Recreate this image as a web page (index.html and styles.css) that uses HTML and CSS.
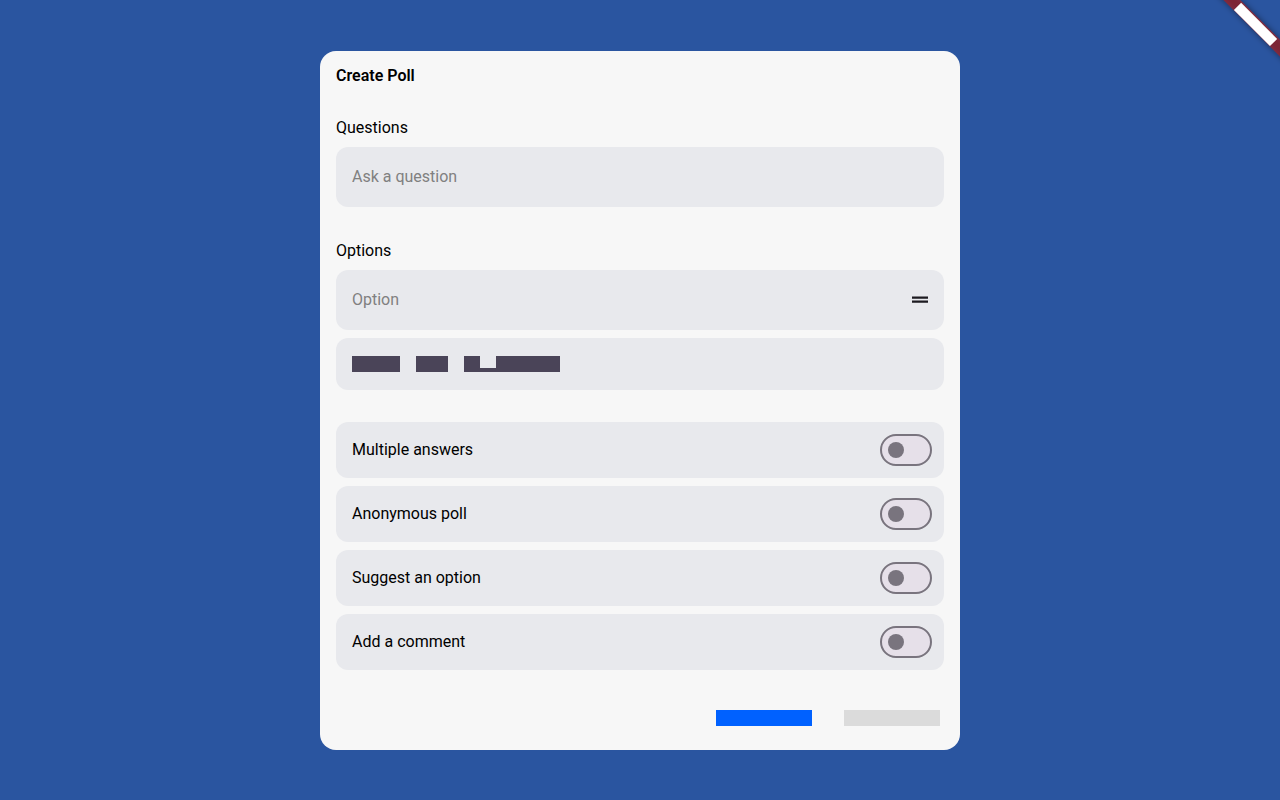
FILE: index.html
```html
<!DOCTYPE html>
<html lang="en">
<head>
<meta charset="utf-8">
<meta name="viewport" content="width=device-width, initial-scale=1">
<title>Create Poll</title>
<link rel="stylesheet" href="styles.css">
</head>
<body class="page">
<svg class="ribbon" width="80" height="80" viewBox="0 0 80 80" aria-hidden="true">
  <g transform="translate(80 0) rotate(45)">
    <rect class="ribbon-band" x="-60" y="28" width="120" height="12"/>
    <rect x="-25.5" y="29.5" width="51" height="10.2" fill="#fff"/>
  </g>
</svg>
<main class="card">
  <form class="poll">
    <h1 class="title">Create Poll</h1>

    <div class="group">
      <label class="label" for="question">Questions</label>
      <input class="field" id="question" type="text" placeholder="Ask a question">
    </div>

    <div class="group">
      <label class="label" for="option">Options</label>
      <div class="option">
        <input class="field" id="option" type="text" placeholder="Option">
        <svg class="handle" width="24" height="24" viewBox="0 0 24 24" fill="#1d1b20" aria-hidden="true"><path d="M20 8.5H4v2.2h16V8.500zM4 14.700h16v-2.200H4v2.200z"/></svg>
      </div>
      <button class="add" type="button" aria-label="Add an option">
        <svg width="208" height="16" viewBox="0 0 208 16" fill="#4a4458" aria-hidden="true"><path d="M0 0h48v16H0zM64 0h32v16H64zM112 0h16v12h16V0h64v16h-96z"/></svg>
      </button>
    </div>

    <div class="settings">
      <label class="row">Multiple answers<input class="switch" type="checkbox" role="switch"></label>
      <label class="row">Anonymous poll<input class="switch" type="checkbox" role="switch"></label>
      <label class="row">Suggest an option<input class="switch" type="checkbox" role="switch"></label>
      <label class="row">Add a comment<input class="switch" type="checkbox" role="switch"></label>
    </div>

    <div class="actions">
      <button class="action" type="button" aria-label="Create"><svg width="96" height="16" viewBox="0 0 96 16" aria-hidden="true"><rect width="96" height="16" fill="#0061ff"/></svg></button>
      <button class="action" type="button" aria-label="Cancel"><svg width="96" height="16" viewBox="0 0 96 16" aria-hidden="true"><rect width="96" height="16" fill="#dbdbdb"/></svg></button>
    </div>
  </form>
</main>
</body>
</html>
```

FILE: styles.css
```css
* {
  box-sizing: border-box;
}

.page {
  margin: 0;
  min-height: 100vh;
  display: grid;
  place-items: center;
  background: #2a55a0;
  color: #000;
  font: 16px/24px Roboto, sans-serif;
}

.ribbon {
  position: absolute;
  top: 0;
  right: 0;
}

.ribbon-band {
  fill: #b71c1c;
  fill-opacity: 0.627;
  filter: drop-shadow(0 0 3px rgba(0, 0, 0, 0.7));
}

.card {
  width: 50%;
  min-width: 320px;
  border-radius: 16px;
  background: #f7f7f7;
}

.poll {
  padding: 13px 16px 12px;
}

.title {
  margin: 0 0 28px;
  font-size: 16px;
  line-height: 24px;
  font-weight: 600;
}

.group {
  display: flex;
  flex-direction: column;
  margin-bottom: 32px;
}

.label {
  margin-bottom: 7px;
}

.field {
  width: 100%;
  height: 60px;
  padding: 0 16px;
  border: 0;
  border-radius: 12px;
  background: #e8e9ed;
  color: #000;
  font: inherit;
}

.field::placeholder {
  color: #808080;
  opacity: 1;
}

.option {
  display: grid;
  align-items: center;
}

.option .field,
.handle {
  grid-area: 1 / 1;
}

.handle {
  justify-self: end;
  margin-right: 12px;
}

.add {
  display: flex;
  align-items: center;
  height: 52px;
  margin-top: 8px;
  padding: 0 16px;
  border: 0;
  border-radius: 12px;
  background: #e8e9ed;
}

.settings {
  display: flex;
  flex-direction: column;
  gap: 8px;
}

.row {
  display: flex;
  align-items: center;
  justify-content: space-between;
  height: 56px;
  padding: 0 12px 0 16px;
  border-radius: 12px;
  background: #e8e9ed;
}

.switch {
  appearance: none;
  display: flex;
  align-items: center;
  width: 52px;
  height: 32px;
  margin: 0;
  padding: 0 6px;
  border: 2px solid #79747e;
  border-radius: 16px;
  background: #e6e0e9;
}

.switch::before {
  content: "";
  width: 16px;
  height: 16px;
  border-radius: 50%;
  background: #79747e;
}

.switch:checked {
  justify-content: flex-end;
}

.actions {
  display: flex;
  justify-content: flex-end;
  gap: 8px;
  margin-top: 28px;
  margin-right: -8px;
}

.action {
  display: flex;
  align-items: center;
  height: 40px;
  padding: 0 12px;
  border: 0;
  border-radius: 20px;
  background: none;
}
```
